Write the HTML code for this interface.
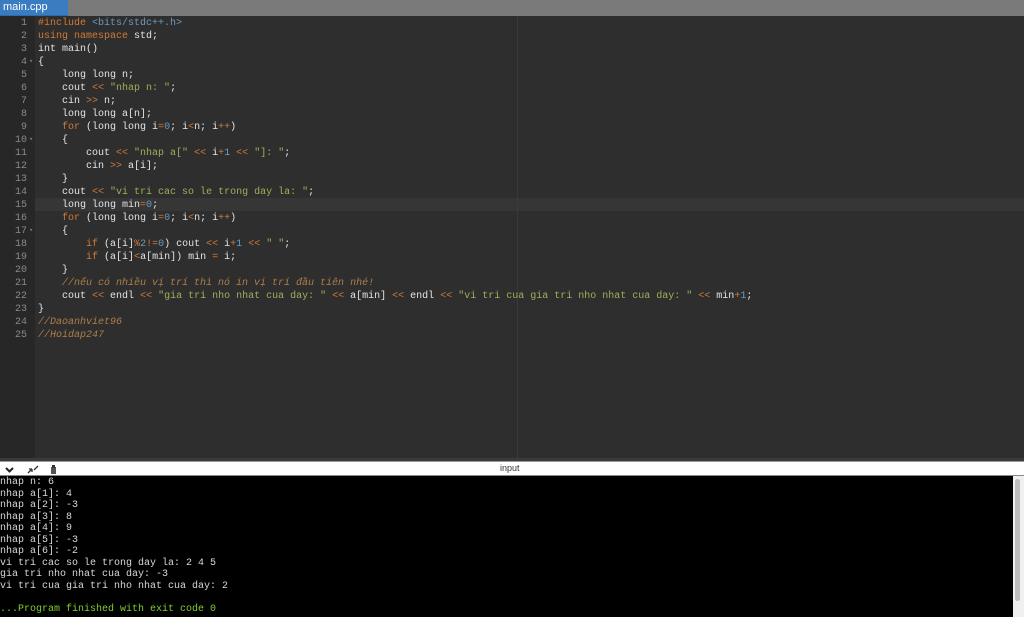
<!DOCTYPE html>
<html><head><meta charset="utf-8"><style>
*{margin:0;padding:0;box-sizing:border-box}
body{width:1024px;height:617px;overflow:hidden;background:#2b2b2b;font-family:"Liberation Mono",monospace;position:relative}
#tabs{position:absolute;left:0;top:0;width:1024px;height:16px;background:#7a7a7a}
#tab{position:absolute;left:0;top:0;width:68px;height:16px;background:#3a7cc0;color:#fff;font:11px "Liberation Sans",sans-serif;line-height:15px;padding-left:3px;border-bottom:1px solid #2e6aa8}
#gut{position:absolute;left:0;top:16px;width:35px;height:442px;background:#272727}
#ed{position:absolute;left:35px;top:16px;width:989px;height:442px;background:#2e2e2e}
#margin{position:absolute;left:517px;top:16px;width:1px;height:442px;background:#3a3a3a}
#hl{position:absolute;left:35px;top:198px;width:989px;height:13px;background:#363636}
.ln{position:absolute;left:0;width:27px;text-align:right;color:#8a8a8a;font-size:10px;line-height:13px}
.fm{position:absolute;left:29px;color:#777;font-size:7px;line-height:13px}
#code{position:absolute;left:38px;top:17px;font-size:10px;line-height:13px;color:#e4e4e4;white-space:pre}
.k{color:#d07a38}.s{color:#9cb05a}.n{color:#6a9ac0}.o{color:#d07a38}.c{color:#b07e4a;font-style:italic}
#sep{position:absolute;left:0;top:458px;width:1024px;height:4px;background:#3a3a3a;border-bottom:1px solid #9a9a9a}
#bar{position:absolute;left:0;top:462px;width:1024px;height:14px;background:#fff;border-bottom:1px solid #888}
#bar .t{position:absolute;left:500px;top:0;font:9px "Liberation Sans",sans-serif;line-height:13px;color:#333}
#term{position:absolute;left:0;top:476px;width:1013px;height:141px;background:#000;color:#d8d8d8;font-size:10px;line-height:11.5px;white-space:pre;padding-top:1px}
#sb{position:absolute;left:1013px;top:476px;width:11px;height:141px;background:#f0f0f0}
#sb div{position:absolute;left:2px;top:3px;width:5px;height:122px;background:#bdbdbd;border-radius:3px}
.g{color:#7ed030}
</style></head><body>
<div id="tabs"><div id="tab">main.cpp</div></div>
<div id="gut"></div><div id="ed"></div><div id="hl"></div><div id="margin"></div>
<div class="ln" style="top:17px">1<br>2<br>3<br>4<br>5<br>6<br>7<br>8<br>9<br>10<br>11<br>12<br>13<br>14<br>15<br>16<br>17<br>18<br>19<br>20<br>21<br>22<br>23<br>24<br>25</div>
<div class="fm" style="top:56px">▾</div><div class="fm" style="top:134px">▾</div><div class="fm" style="top:225px">▾</div>
<div id="code"><span class="k">#include</span> <span class="n">&lt;bits/stdc++.h&gt;</span>
<span class="k">using namespace</span> std;
int main()
{
    long long n;
    cout <span class="o">&lt;&lt;</span> <span class="s">"nhap n: "</span>;
    cin <span class="o">&gt;&gt;</span> n;
    long long a[n];
    <span class="k">for</span> (long long i<span class="o">=</span><span class="n">0</span>; i<span class="o">&lt;</span>n; i<span class="o">++</span>)
    {
        cout <span class="o">&lt;&lt;</span> <span class="s">"nhap a["</span> <span class="o">&lt;&lt;</span> i<span class="o">+</span><span class="n">1</span> <span class="o">&lt;&lt;</span> <span class="s">"]: "</span>;
        cin <span class="o">&gt;&gt;</span> a[i];
    }
    cout <span class="o">&lt;&lt;</span> <span class="s">"vi tri cac so le trong day la: "</span>;
    long long min<span class="o">=</span><span class="n">0</span>;
    <span class="k">for</span> (long long i<span class="o">=</span><span class="n">0</span>; i<span class="o">&lt;</span>n; i<span class="o">++</span>)
    {
        <span class="k">if</span> (a[i]<span class="o">%</span><span class="n">2</span><span class="o">!=</span><span class="n">0</span>) cout <span class="o">&lt;&lt;</span> i<span class="o">+</span><span class="n">1</span> <span class="o">&lt;&lt;</span> <span class="s">" "</span>;
        <span class="k">if</span> (a[i]<span class="o">&lt;</span>a[min]) min <span class="o">=</span> i;
    }
    <span class="c">//nếu có nhiều vị trí thì nó in vị trí đầu tiên nhé!</span>
    cout <span class="o">&lt;&lt;</span> endl <span class="o">&lt;&lt;</span> <span class="s">"gia tri nho nhat cua day: "</span> <span class="o">&lt;&lt;</span> a[min] <span class="o">&lt;&lt;</span> endl <span class="o">&lt;&lt;</span> <span class="s">"vi tri cua gia tri nho nhat cua day: "</span> <span class="o">&lt;&lt;</span> min<span class="o">+</span><span class="n">1</span>;
}
<span class="c">//Daoanhviet96</span>
<span class="c">//Hoidap247</span></div>
<div id="sep"></div>
<div id="bar">
<svg style="position:absolute;left:5px;top:3px" width="60" height="10"><path d="M1 3 L4.5 6.5 L8 3" stroke="#222" stroke-width="2" fill="none"/><path d="M23 8 L27 4 M27 4 h-3 M27 4 v3 M33 1 L29 5" stroke="#333" stroke-width="1.3" fill="none"/><rect x="46" y="2" width="5" height="7" fill="#555"/><rect x="47" y="0" width="3" height="3" fill="#333"/></svg>
<span class="t">input</span></div>
<div id="term">nhap n: 6
nhap a[1]: 4
nhap a[2]: -3
nhap a[3]: 8
nhap a[4]: 9
nhap a[5]: -3
nhap a[6]: -2
vi tri cac so le trong day la: 2 4 5
gia tri nho nhat cua day: -3
vi tri cua gia tri nho nhat cua day: 2

<span class="g">...Program finished with exit code 0</span></div>
<div id="sb"><div></div></div>
</body></html>
